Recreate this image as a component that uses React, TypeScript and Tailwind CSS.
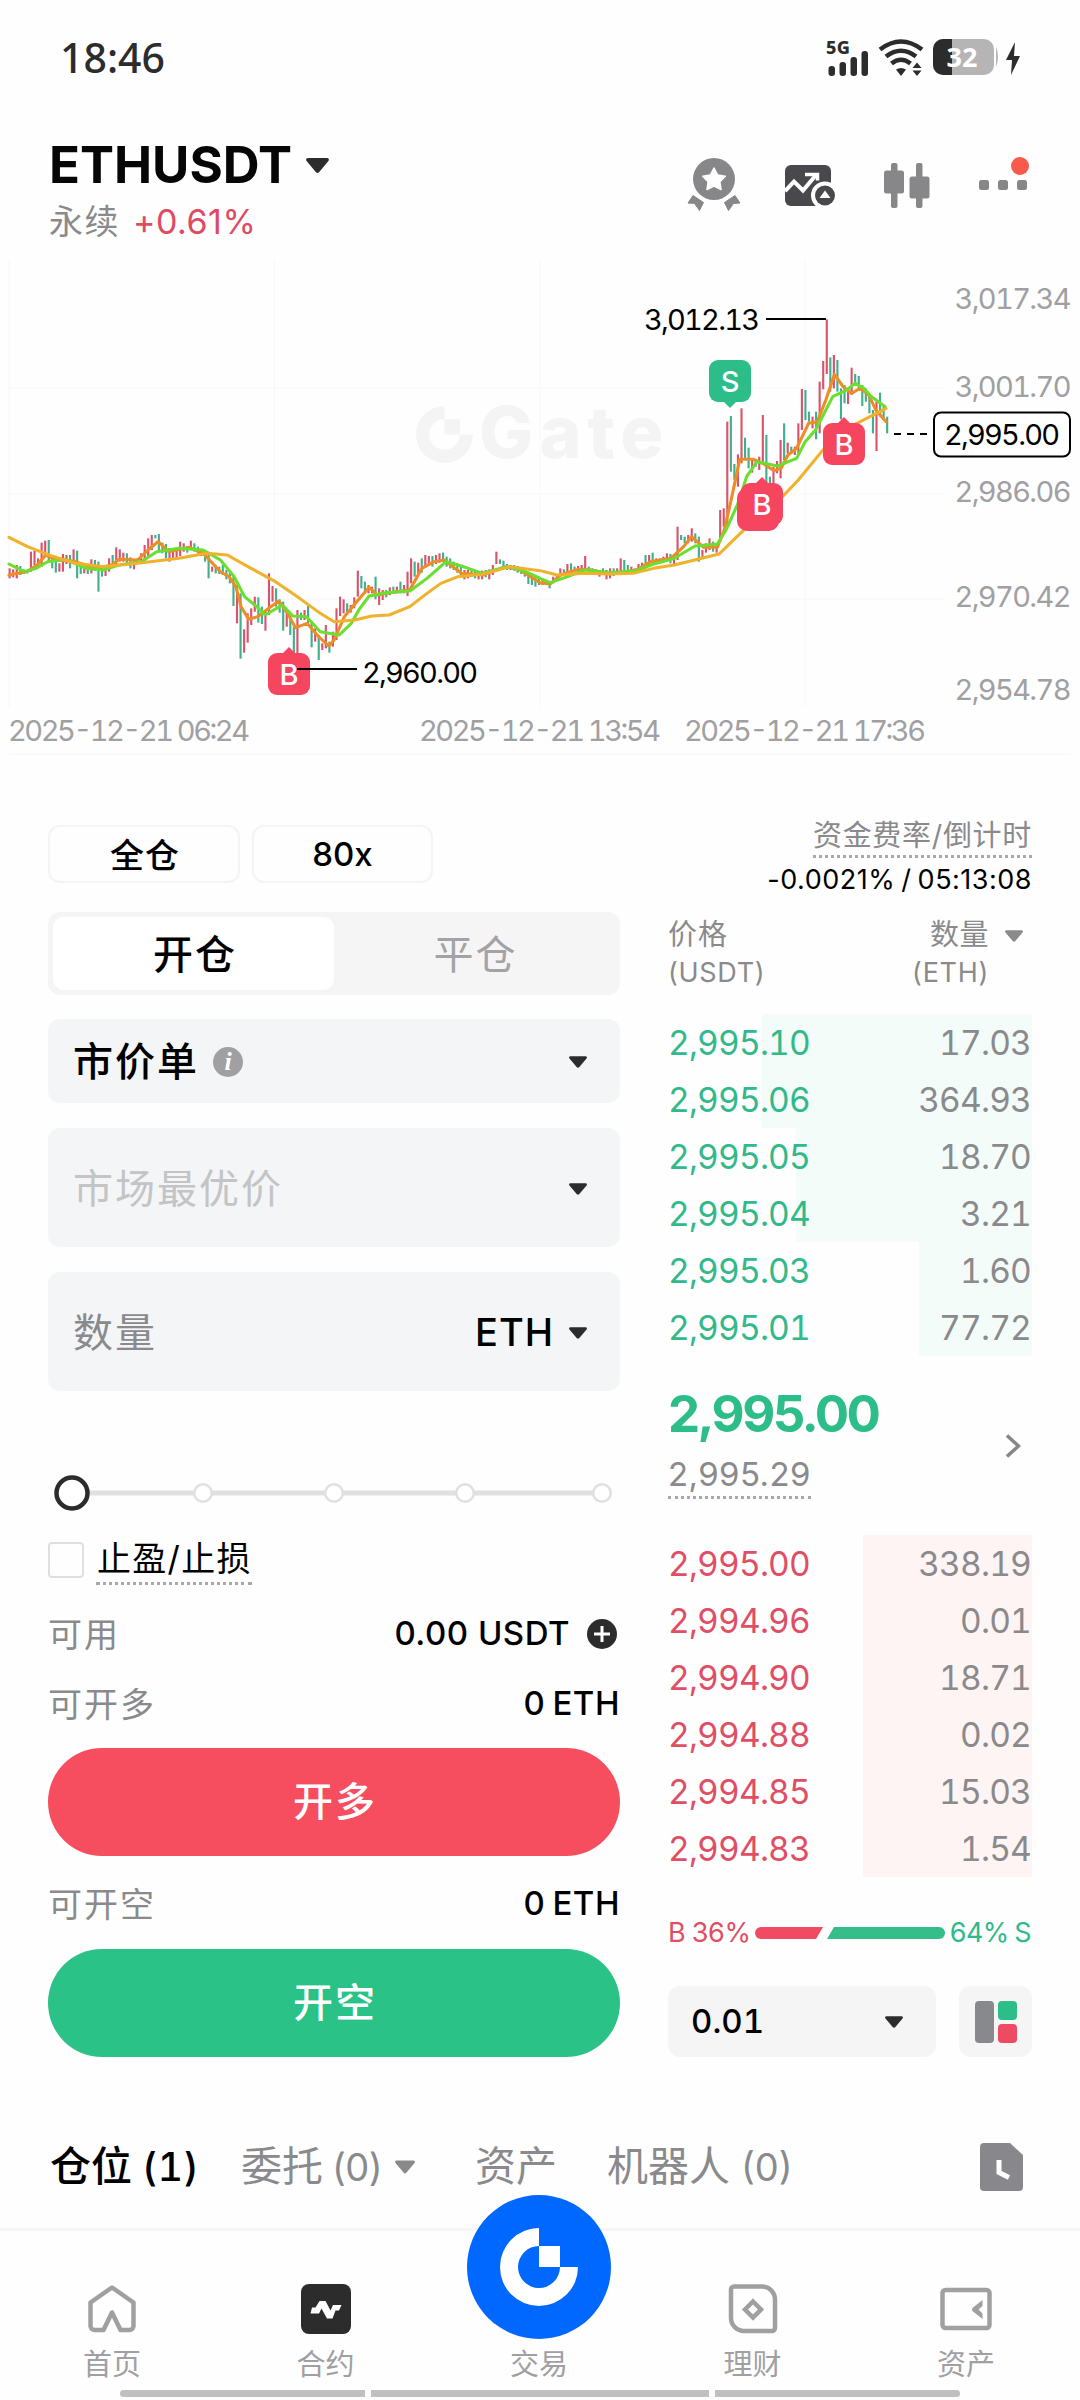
import clsx from 'clsx';
import React from 'react';

type Side = 'buy' | 'sell';

interface BookRow {
  price: string;
  amount: string;
  depth: number;
}

// widths of the depth bars are in px, measured from the right edge
const greenRows: BookRow[] = [
  { price: '2,995.10', amount: '17.03', depth: 270 },
  { price: '2,995.06', amount: '364.93', depth: 270 },
  { price: '2,995.05', amount: '18.70', depth: 236 },
  { price: '2,995.04', amount: '3.21', depth: 236 },
  { price: '2,995.03', amount: '1.60', depth: 113 },
  { price: '2,995.01', amount: '77.72', depth: 113 },
];

const redRows: BookRow[] = [
  { price: '2,995.00', amount: '338.19', depth: 169 },
  { price: '2,994.96', amount: '0.01', depth: 169 },
  { price: '2,994.90', amount: '18.71', depth: 169 },
  { price: '2,994.88', amount: '0.02', depth: 169 },
  { price: '2,994.85', amount: '15.03', depth: 169 },
  { price: '2,994.83', amount: '1.54', depth: 169 },
];

// one entry per candle: colour, high, low (plot units, 0 is the top)
const CANDLES = `
r925-955 r928-952 r915-955 g918-945 g928-942 g930-940 r875-935 r873-915 r895-925 r848-920
r842-885 g840-905 g885-925 g892-938 r910-935 r882-935 r885-912 g885-925 r868-912 g872-955
g910-942 r922-940 g915-942 r898-940 g900-932 g905-995 g922-950 r920-948 r895-935 g885-922
r862-920 r868-905 r878-905 g880-912 g892-925 r900-928 g895-910 r880-905 r855-905 r835-888
r825-870 g825-835 g822-872 g848-880 g852-895 r865-905 r870-900 r868-895 r845-888 r850-875
g858-878 r842-870 g850-875 g860-880 g868-888 g875-905 g880-955 r920-935 g915-940 g920-942
g915-945 g930-958 g935-970 g945-1038 r975-1090 g1000-1196 r1108-1178 r1060-1148 r1045-1095 r1010-1055
g1012-1088 g1040-1092 r1055-1112 r940-1065 r978-1025 g985-1040 g1018-1058 g1025-1112 r1060-1100 g1068-1125
g1100-1180 r1050-1185 g1058-1080 r1050-1080 g1038-1090 g1085-1162 r1105-1145 g1125-1200 r1150-1170 r1095-1165
g1145-1178 r1115-1160 r1045-1140 r1010-1068 r1018-1060 g1030-1062 r1035-1058 r1012-1045 r932-1010 g948-985
g965-1000 r975-1000 r980-1000 g950-1018 r985-1035 r990-1020 g990-1012 r982-1005 g980-1000 r980-1000
g965-1000 r975-1000 r935-1008 r895-970 g905-950 r908-945 g895-938 r885-922 r888-918 g888-920
r885-912 r880-908 g878-905 g890-920 g895-925 g905-930 g910-938 g920-950 r930-958 r930-955
g932-950 g935-955 r935-958 r932-958 g930-952 r928-958 r915-945 r875-912 g898-912 g902-920
g912-930 r915-930 g915-932 g918-938 g922-942 g928-950 g935-972 g940-975 g945-980 g950-975
r960-975 r965-975 g965-985 r950-970 g945-960 r925-950 g928-942 r912-940 g910-935 g920-935
r918-935 r915-935 r888-930 g920-932 g925-940 g928-945 r930-950 g925-945 r930-958 r925-955
g925-948 r925-945 r895-935 g900-930 g915-935 r920-938 g925-940 r912-935 r908-930 g885-925
r885-915 g878-910 r895-910 g895-910 r890-908 r880-905 g882-910 r890-912 r800-900 g825-840
g830-850 r825-850 r805-845 g820-850 g830-905 r870-895 r850-878 r835-870 g845-875 r850-878
r750-845 r745-800 r485-800 g468-635 g612-660 r583-680 r445-610 g533-600 g563-625 r598-638
g600-620 r590-630 r465-610 g525-680 g650-700 r620-700 r603-640 r540-655 g490-600 r548-580
g560-580 r560-585 r490-580 r387-510 g390-480 g455-485 r470-505 g455-538 r365-520 r303-388
r178-342 g292-395 r285-385 g300-395 g385-478 g375-430 r395-432 r323-405 g342-375 g348-385
g375-438 g385-425 g405-460 g450-520 r425-573 g398-470 g440-480 g470-520
`
  .trim()
  .split(/\s+/)
  .map((entry, i) => {
    const [high, low] = entry.slice(1).split('-').map(Number);
    return { x: 28 + i * 10.316, high, low, up: entry[0] === 'r' };
  });

const MA_SHORT =
  '26,945 77,935 108,915 133,885 160,900 211,903 280,925 325,915 345,898 400,900 430,870 459,845 490,875 550,862 590,880 640,935 665,950 685,980 700,1040 722,1078 748,1070 780,1045 810,1023 835,1060 858,1103 892,1090 925,1130 955,1158 970,1140 1000,1070 1040,1020 1072,982 1095,1005 1150,995 1190,990 1225,925 1260,905 1290,900 1340,940 1400,945 1470,920 1510,930 1568,968 1598,972 1628,945 1678,928 1718,930 1768,942 1848,930 1888,905 1948,895 1985,860 2008,830 2043,862 2083,862 2103,810 2123,720 2148,598 2188,598 2218,612 2248,632 2268,625 2288,585 2313,565 2348,490 2373,485 2398,420 2423,343 2448,380 2473,400 2498,385 2523,405 2543,450 2573,485';
const MA_MID =
  '26,912 70,935 105,925 138,905 190,898 250,925 300,930 345,915 410,905 455,875 520,865 590,870 640,900 680,950 710,1010 740,1035 770,1065 820,1035 850,1068 890,1070 930,1115 985,1125 1020,1090 1045,1045 1072,1008 1120,998 1190,993 1240,955 1295,905 1340,918 1400,940 1470,920 1520,932 1568,955 1598,968 1648,950 1698,930 1768,938 1848,932 1898,912 1958,895 2018,858 2083,852 2108,810 2143,730 2168,650 2198,605 2258,618 2313,595 2338,545 2368,510 2418,410 2458,390 2483,370 2508,385 2528,408 2570,440';
const MA_LONG =
  '26,832 80,860 150,888 220,910 300,920 400,910 520,895 600,880 660,885 720,920 800,965 870,1015 930,1060 970,1085 1030,1080 1080,1068 1130,1065 1190,1040 1240,1000 1280,970 1330,950 1400,943 1480,920 1568,932 1618,945 1698,940 1768,942 1838,940 1898,925 1958,915 2088,882 2158,812 2208,770 2274,708 2318,660 2388,572 2448,510 2498,485 2573,445';

const Caret: React.FC<{ className?: string }> = ({ className }) => (
  <svg viewBox="0 0 20 13" className={clsx('shrink-0', className)} fill="currentColor">
    <path d="M1.6 0h16.8c1.3 0 2 1.5 1.1 2.5l-8 9.6a2 2 0 0 1-3 0l-8-9.6C-.4 1.500.3 0 1.6 0z" />
  </svg>
);

const GateMark: React.FC<{ className?: string }> = ({ className }) => (
  <svg viewBox="0 0 78 78" className={className} fill="currentColor">
    <path d="M39 0v18a21 21 0 1 0 21 21h18A39 39 0 1 1 39 0z" />
    <path d="M39 18h21v21H39z" />
  </svg>
);

const StatusBar = () => (
  <div className="flex h-[116px] items-center justify-between pl-[60px] pr-[50px] text-[#2c2c2c]">
    <span className="font-['Noto_Sans'] text-[41px] font-medium">18:46</span>
    <svg width="204" height="48" viewBox="0 0 204 48" fill="currentColor">
      <text x="0" y="20" fontSize="18" fontWeight="800" fontFamily="Noto Sans" textLength="24">
        5G
      </text>
      <rect x="2.500" y="32" width="6.500" height="10" rx="3" />
      <rect x="13.500" y="28" width="6.500" height="14" rx="3" />
      <rect x="24.500" y="23" width="6.500" height="19" rx="3" />
      <rect x="35.500" y="17" width="6.500" height="25" rx="3" />
      <g fill="none" stroke="currentColor" strokeWidth="4.600">
        <path d="M54 15.500Q75 -.5 96 15.500" />
        <path d="M60 22.500Q75 11 90 22.500" />
        <path d="M65.500 29.500Q75 22 84.500 29.500" />
      </g>
      <path d="M70 35.500q5-3 10 0l-5 6.500z" />
      <path d="M91 28.500l4.500 5.500h-9zM91 42l4.500-5.500h-9z" />
      <rect x="107" y="5" width="61" height="36" rx="10" fill="#b5b5b5" />
      <path d="M170 13q4 10 0 20z" fill="#b5b5b5" />
      <path d="M117 5h9v36h-9a10 10 0 0 1-10-10V15a10 10 0 0 1 10-10z" />
      <text x="120.500" y="33" fontSize="27" fontWeight="700" fontFamily="Noto Sans" fill="#fff" textLength="31">
        32
      </text>
      <path d="M189 8l-9 18h6l-1 15 9-19h-6z" />
    </svg>
  </div>
);

const Header = () => (
  <header className="flex h-[144px] items-start justify-between pl-[49px] pr-[48px]">
    <div>
      <div className="mt-[18px] flex items-center">
        <h1 className="text-[51px] font-bold leading-[62px] text-[#060606]">ETHUSDT</h1>
        <Caret className="ml-[14px] h-[15px] w-[23px] text-[#2c2c2c]" />
      </div>
      <div className="mt-[6px] flex items-center gap-[13px] text-[34px] leading-[40px]">
        <span className="tracking-[1.500px] text-[#8a8a8c]">永续</span>
        <span className="tracking-[0.500px] text-[#df4a62]">+0.61%</span>
      </div>
    </div>
    <div className="mt-[36px] flex items-start">
      <svg width="54" height="60" viewBox="0 0 54 60" fill="#87878a">
        <circle cx="27" cy="27" r="21" />
        <path
          d="M27 16l3.600 6.900 7.700 1.300-5.400 5.600 1.100 7.700-7-3.400-7 3.400 1.100-7.700-5.400-5.600 7.700-1.300z"
          fill="#fff"
          stroke="#fff"
          strokeWidth="1.500"
          strokeLinejoin="round"
        />
        <path d="M6 43.500l10.500 7-4 8-5-7-6.500-.5z" stroke="#87878a" strokeLinejoin="round" />
        <path d="M48 43.500l-10.500 7 4 8 5-7 6.500-.5z" stroke="#87878a" strokeLinejoin="round" />
      </svg>
      <svg width="52" height="60" viewBox="0 0 52 60" className="ml-[43px]">
        <rect x="1" y="13" width="46" height="41" rx="6" fill="#48484d" />
        <path d="M1 39l9-9.500 9 9 13-15.500" fill="none" stroke="#fff" strokeWidth="4" />
        <path d="M21 22.500h12.500v6" fill="none" stroke="#fff" strokeWidth="3.500" />
        <circle cx="41" cy="43.500" r="14" fill="#fff" />
        <circle cx="41" cy="43.500" r="10" fill="#48484d" />
        <path d="M41 38.500l5.500 7.500h-11z" fill="#fff" />
      </svg>
      <svg width="46" height="60" viewBox="0 0 46 60" className="ml-[48px]" fill="#87878a">
        <rect x="7" y="11" width="6.500" height="45" rx="2" />
        <rect y="18.500" width="20" height="23" rx="2.500" />
        <rect x="32" y="11" width="6.500" height="45" rx="2" />
        <rect x="25.500" y="24.500" width="20" height="22" rx="2.500" />
      </svg>
      <svg width="54" height="60" viewBox="0 0 54 60" className="ml-[48px]" fill="#87878a">
        <rect x="1" y="28" width="10" height="10" rx="2.500" />
        <rect x="20" y="28" width="10" height="10" rx="2.500" />
        <rect x="39" y="28" width="10" height="10" rx="2.500" />
        <circle cx="42" cy="14" r="9" fill="#fa5a4b" />
      </svg>
    </div>
  </header>
);

interface MarkerProps {
  x: number;
  y: number;
  side: Side;
}

const Marker: React.FC<MarkerProps> = ({ x, y, side }) => {
  const color = side === 'buy' ? '#f5455f' : '#2dbd88';
  const tip = side === 'buy' ? 'M-7 -20L0 -27L7 -20z' : 'M-7 20L0 27L7 20z';
  return (
    <g transform={`translate(${x} ${y})`}>
      <path d={tip} fill={color} />
      <rect x="-21" y="-21" width="42" height="42" rx="9" fill={color} />
      <text y="10.500" textAnchor="middle" fontSize="29" fontWeight="500" fill="#fff">
        {side === 'buy' ? 'B' : 'S'}
      </text>
    </g>
  );
};

const axisLabels = [
  { y: 49, text: '3,017.34' },
  { y: 137, text: '3,001.70' },
  { y: 242, text: '2,986.06' },
  { y: 347, text: '2,970.42' },
  { y: 440, text: '2,954.78' },
];

const timeLabels = [
  { x: 8, text: '2025-12-21 06:24' },
  { x: 419, text: '2025-12-21 13:54' },
  { x: 684, text: '2025-12-21 17:36' },
];

const PriceChart = () => (
  <section className="relative h-[500px]">
    <div className="absolute left-[416px] top-[132px] flex items-center text-[#f4f4f5]">
      <GateMark className="mt-[4px] h-[57px] w-[57px]" />
      <span className="ml-[6px] text-[72px] font-extrabold leading-[80px] tracking-[6px]">Gate</span>
    </div>
    <svg
      width="1080"
      height="500"
      viewBox="0 0 3136 1500"
      preserveAspectRatio="none"
      className="absolute inset-0"
      fill="none"
    >
      <g stroke="#f7f7f8" strokeWidth="3">
        <path d="M797 0V1340M1568 0V1340M2338 0V1340M26 0V1340" />
        <path d="M26 385H2740M26 702H2740M26 1018H2740" />
        <path d="M26 1483H3110" stroke="#f3f3f4" />
      </g>
      {CANDLES.map((c) => (
        <path key={c.x} d={`M${c.x} ${c.high}V${c.low}`} stroke={c.up ? '#d9536b' : '#43ae8c'} strokeWidth="6.200" />
      ))}
      <g strokeWidth="9" strokeLinejoin="round" strokeLinecap="round">
        <polyline points={MA_SHORT} stroke="#ee8c25" />
        <polyline points={MA_MID} stroke="#6bdf30" />
        <polyline points={MA_LONG} stroke="#f0b22c" />
      </g>
    </svg>
    <svg width="1080" height="500" viewBox="0 0 1080 500" className="absolute inset-0 tabular-nums" fontSize="29">
      <Marker x={289} y={414} side="buy" />
      <Marker x={730} y={121} side="sell" />
      <rect x="737" y="228" width="42" height="43" rx="10" fill="#f5455f" />
      <Marker x={762} y={244} side="buy" />
      <Marker x={844} y={184} side="buy" />
      <path d="M766 59H826M297 409H357" stroke="#000" strokeWidth="2" />
      <path d="M894 174H934" stroke="#000" strokeWidth="2" strokeDasharray="7 6" />
      <text x="644" y="70" textLength="116">
        3,012.13
      </text>
      <text x="362" y="423" textLength="116">
        2,960.00
      </text>
      <rect x="934" y="152.500" width="136" height="44" rx="7" fill="#fff" stroke="#000" strokeWidth="2" />
      <text x="944" y="185" textLength="116">
        2,995.00
      </text>
      <g fill="#a0a0a2">
        {axisLabels.map((l) => (
          <text key={l.text} x="954.500" y={l.y} textLength="117">
            {l.text}
          </text>
        ))}
        {timeLabels.map((l) => (
          <text key={l.text} x={l.x} y="481" textLength="242">
            {l.text}
          </text>
        ))}
      </g>
    </svg>
  </section>
);

const SLIDER_STOPS = [203, 334, 465, 602];

const OrderForm = () => (
  <div className="flex w-[572px] flex-col">
    <div className="flex h-[58px] gap-[12px] text-black">
      <button className="flex w-[192px] items-center justify-center rounded-xl border-2 border-[#f4f4f5] pl-[2px] pt-[2px] text-[34px] font-medium tracking-[1px]">
        全仓
      </button>
      <button className="flex w-[181px] items-center justify-center rounded-xl border-2 border-[#f4f4f5] pt-[1px] text-[33px] font-medium">
        80x
      </button>
    </div>

    <div className="mt-[29px] flex h-[83px] rounded-xl bg-[#f5f5f6] p-[5px] text-[40px] tracking-[2px]">
      <button className="w-[281px] rounded-[11px] bg-white pl-[3px] pt-[2px] font-medium text-black">开仓</button>
      <button className="flex-1 pl-[2px] pt-[2px] text-[#a3a3a5]">平仓</button>
    </div>

    <div className="mt-[24px] flex h-[84px] items-center rounded-xl bg-[#f4f5f6] pl-[25px] pr-[33px] pt-[2px]">
      <span className="text-[40px] font-medium tracking-[2px] text-black">市价单</span>
      <span className="ml-[14px] flex h-[30px] w-[30px] items-center justify-center rounded-full bg-[#a0a0a2] font-['Liberation_Serif'] text-[26px] font-bold italic leading-none text-white">
        i
      </span>
      <Caret className="ml-auto h-[12px] w-[18px] text-[#2c2c2c]" />
    </div>

    <div className="mt-[25px] flex h-[119px] items-center rounded-xl bg-[#f4f5f6] pl-[25px] pr-[33px] pt-[2px]">
      <span className="text-[40px] tracking-[2px] text-[#c2c4c6]">市场最优价</span>
      <Caret className="ml-auto h-[12px] w-[18px] text-[#2c2c2c]" />
    </div>

    <div className="mt-[25px] flex h-[119px] items-center rounded-xl bg-[#f4f5f6] pl-[25px] pr-[33px] pt-[2px]">
      <span className="text-[40px] tracking-[2px] text-[#8a8a8c]">数量</span>
      <span className="ml-auto text-[38px] font-medium tracking-[1px] text-black">ETH</span>
      <Caret className="ml-[15px] h-[12px] w-[18px] text-[#2c2c2c]" />
    </div>

    <svg width="572" height="40" viewBox="48 0 572 40" className="mt-[82px] shrink-0" fill="#fff">
      <rect x="72" y="17.500" width="530" height="5" fill="#e0e0e0" />
      {SLIDER_STOPS.map((x) => (
        <circle key={x} cx={x} cy="20" r="8.800" stroke="#e0e0e0" strokeWidth="2.500" />
      ))}
      <circle cx="72" cy="20" r="15.500" stroke="#2c2c2c" strokeWidth="4.500" />
    </svg>

    <div className="mt-[22px] flex h-[50px] items-center">
      <span className="mt-[-1px] h-[36px] w-[36px] rounded border-2 border-[#e0e0e0]" />
      <span className="relative ml-[12px] border-b-[3px] border-dotted border-[#a8a8aa] pl-[1px] text-[34px] leading-[46px] tracking-[1.300px] text-black">
        止盈/止损
      </span>
    </div>

    <div className="mt-[24px] flex h-[50px] items-center text-[33px]">
      <span className="text-[34px] tracking-[2px] text-[#8a8a8c]">可用</span>
      <span className="ml-auto font-medium tracking-[0.500px] text-black">0.00 USDT</span>
      <svg width="30" height="30" viewBox="0 0 30 30" className="ml-[17px] mr-[3px]">
        <circle cx="15" cy="15" r="15" fill="#2c2c2c" />
        <path d="M15 7v16M7 15h16" stroke="#fff" strokeWidth="3" />
      </svg>
    </div>

    <div className="mt-[20px] flex h-[50px] items-center justify-between text-[33px]">
      <span className="text-[34px] tracking-[2px] text-[#8a8a8c]">可开多</span>
      <span className="font-medium tracking-[0.500px] text-black [word-spacing:-2px]">0 ETH</span>
    </div>
    <button className="mt-[19px] h-[108px] rounded-full bg-[#f64d5f] pl-[2px] text-[40px] font-medium tracking-[2px] text-white">
      开多
    </button>

    <div className="mt-[23px] flex h-[50px] items-center justify-between text-[33px]">
      <span className="text-[34px] tracking-[2px] text-[#8a8a8c]">可开空</span>
      <span className="font-medium tracking-[0.500px] text-black [word-spacing:-2px]">0 ETH</span>
    </div>
    <button className="mt-[20px] h-[108px] rounded-full bg-[#2bc287] pl-[2px] text-[40px] font-medium tracking-[2px] text-white">
      开空
    </button>
  </div>
);

const BookRows: React.FC<{ rows: BookRow[]; side: Side }> = ({ rows, side }) => (
  <div>
    {rows.map((row) => (
      <div
        key={row.price}
        className="relative flex h-[57px] items-center justify-between pr-[1px] pt-[2px] text-[33.500px] tracking-[-0.800px] tabular-nums"
      >
        <div
          className={clsx('absolute inset-y-0 right-0', side === 'buy' ? 'bg-[#f3fcf9]' : 'bg-[#fef4f3]')}
          style={{ width: row.depth }}
        />
        <span className={clsx('relative', side === 'buy' ? 'text-[#31b98a]' : 'text-[#e04e64]')}>{row.price}</span>
        <span className="relative text-[#8a8a8c]">{row.amount}</span>
      </div>
    ))}
  </div>
);

const OrderBook = () => (
  <div className="flex w-[364px] flex-col">
    <div className="flex flex-col items-end">
      <span className="mt-[-9px] border-b-[3px] border-dotted border-[#a8a8aa] text-[29px] leading-[39px] tracking-[0.700px] text-[#8a8a8c]">
        资金费率/倒计时
      </span>
      <span className="mt-[4px] whitespace-nowrap text-[27px] leading-[36px] tracking-[0.500px] text-black [word-spacing:-2px]">
        -0.0021% / 05:13:08
      </span>
    </div>

    <div className="mt-[18px] flex justify-between pr-[9px] text-[29px] leading-[38px] text-[#8a8a8c]">
      <div>
        <div className="tracking-[1px]">价格</div>
        <div className="text-[27px] tracking-[0.700px]">(USDT)</div>
      </div>
      <div className="flex">
        <div className="text-right">
          <div className="tracking-[0.500px]">数量</div>
          <div className="text-[27px] tracking-[0.700px]">(ETH)</div>
        </div>
        <Caret className="ml-[16px] mt-[14px] h-[12px] w-[18px]" />
      </div>
    </div>

    <div className="mt-[22px]">
      <BookRows rows={greenRows} side="buy" />
    </div>

    <div className="flex h-[179px] items-center justify-between pr-[11px]">
      <div className="mt-[-8px] flex flex-col items-start">
        <span className="text-[51px] font-bold leading-[60px] tracking-[-2.500px] text-[#2dbd88]">2,995.00</span>
        <span className="mt-[8px] border-b-[3px] border-dotted border-[#a8a8aa] text-[33px] leading-[44px] tracking-[0.400px] text-[#8a8a8c]">
          2,995.29
        </span>
      </div>
      <svg width="15" height="24" viewBox="0 0 15 24" fill="none" stroke="#87878a" strokeWidth="3.500">
        <path d="M1 1.500L12.500 12L1 22.500" />
      </svg>
    </div>

    <BookRows rows={redRows} side="sell" />

    <div className="mt-[36px] flex h-[40px] items-center justify-between whitespace-nowrap pr-[1px] text-[27px] [word-spacing:-1px]">
      <span className="tracking-[-0.300px] text-[#e04e64]">B 36%</span>
      <svg width="190" height="12" viewBox="0 0 190 12">
        <path d="M6 0h62l-7 12H6A6 6 0 0 1 6 0z" fill="#f04b63" />
        <path d="M79 0h105a6 6 0 0 1 0 12H72z" fill="#35bd8a" />
      </svg>
      <span className="tracking-[-0.700px] text-[#31b98a]">64% S</span>
    </div>

    <div className="mt-[33px] flex h-[71px] justify-between">
      <div className="flex w-[268px] items-center justify-between rounded-xl bg-[#f5f5f6] pl-[23px] pr-[33px]">
        <span className="text-[33px] font-medium tabular-nums text-black">0.01</span>
        <Caret className="h-[12px] w-[18px] text-[#2c2c2c]" />
      </div>
      <div className="flex w-[73px] items-center justify-center gap-[4px] rounded-xl bg-[#f5f5f6]">
        <span className="h-[42px] w-[19px] rounded-sm bg-[#87898c]" />
        <span className="flex flex-col gap-[4px]">
          <span className="h-[19px] w-[19px] rounded-sm bg-[#2dbd88]" />
          <span className="h-[19px] w-[19px] rounded-sm bg-[#ee4b62]" />
        </span>
      </div>
    </div>
  </div>
);

const PositionTabs = () => (
  <div className="flex h-[94px] items-center pl-[50px] pr-[57px] text-[41px] text-[#8a8a8c]">
    <span className="w-[191px] font-medium text-black">
      仓位<span className="ml-[10px] text-[39px] tabular-nums tracking-[0.500px]">(1)</span>
    </span>
    <span className="flex w-[234px] items-center">
      委托<span className="ml-[9px] text-[38px] tracking-[-0.500px]">(0)</span>
      <Caret className="ml-[13px] h-[14px] w-[20px]" />
    </span>
    <span className="w-[132px]">资产</span>
    <span>
      机器人<span className="ml-[11px] text-[38px]">(0)</span>
    </span>
    <svg width="43" height="49" viewBox="0 0 43 49" className="ml-auto" fill="#87878c">
      <path d="M4 0h26l13 12v32a4 4 0 0 1-4 4H4a4 4 0 0 1-4-4V4a4 4 0 0 1 4-4z" />
      <path d="M19 17v12.500l10 5" fill="none" stroke="#fff" strokeWidth="5" />
    </svg>
  </div>
);

const navItems = [
  {
    label: '首页',
    icon: (
      <svg width="52" height="52" viewBox="0 0 52 52" fill="none" stroke="#a0a0a2" strokeWidth="4.500" strokeLinejoin="round">
        <path d="M26 4.500L47.500 19.500V43a4 4 0 0 1-4 4H34.500L26 29.500 17.500 47H8.500a4 4 0 0 1-4-4V19.500z" />
      </svg>
    ),
  },
  {
    label: '合约',
    icon: (
      <svg width="52" height="52" viewBox="0 0 52 52">
        <rect x="1" y="1" width="50" height="50" rx="8" fill="#2c2c2c" />
        <path d="M12 24.500h3.500l4-6.500H25.500l5 9.500 2.500-5.500h8.500l-2.500 5.500h-3.500L32.500 35.500H27L21.500 25.500l-2.500 5h-8.500z" fill="#fff" />
      </svg>
    ),
  },
  { label: '交易', icon: null },
  {
    label: '理财',
    icon: (
      <svg width="52" height="52" viewBox="0 0 52 52" fill="none" stroke="#a0a0a2" strokeWidth="4.500">
        <path d="M7 3.500h28A13 13 0 0 1 48 16.500V45a3 3 0 0 1-3 3H17A13 13 0 0 1 4 35V6.500a3 3 0 0 1 3-3z" />
        <path d="M26 18.500l8 8-8 8-8-8z" strokeWidth="4.500" />
      </svg>
    ),
  },
  {
    label: '资产',
    icon: (
      <svg width="54" height="52" viewBox="0 0 54 52" fill="none" stroke="#a0a0a2" strokeWidth="4.500">
        <rect x="3.500" y="7" width="47" height="38" rx="3" />
        <path d="M43.500 17v6L39.500 26.500l4 4V36L34 28.500a2.500 2.500 0 0 1 0-4z" fill="#a0a0a2" stroke="none" />
      </svg>
    ),
  },
];

const BottomNav = () => (
  <nav className="relative flex h-[172px] justify-center border-t-[3px] border-[#f5f5f6] pr-[2px]">
    {navItems.map((item) => (
      <div key={item.label} className="flex w-[213.500px] flex-col items-center pt-[52px]">
        <div className="h-[52px]">{item.icon}</div>
        <span className="mt-[10px] text-[29px] leading-[40px] text-[#a0a0a2]">{item.label}</span>
      </div>
    ))}
    <div className="absolute left-[467px] top-[-36px] flex h-[144px] w-[144px] items-center justify-center rounded-full bg-[#0068ff] text-white">
      <GateMark className="h-[78px] w-[78px]" />
    </div>
    <div className="absolute bottom-[3px] left-[120px] flex gap-[6px]">
      <span className="h-[7px] w-[245px] rounded-l-full bg-[#c0c0c0]" />
      <span className="h-[7px] w-[338px] bg-[#c0c0c0]" />
      <span className="h-[7px] w-[245px] rounded-r-full bg-[#c0c0c0]" />
    </div>
  </nav>
);

export default function App() {
  return (
    <div className="flex h-[2400px] w-[1080px] flex-col overflow-hidden bg-[#fefefe] font-['Inter','Noto_Sans_CJK_SC',sans-serif]">
      <StatusBar />
      <Header />
      <PriceChart />
      <main className="flex h-[1360px] items-start justify-between pl-[48px] pr-[48px] pt-[65px]">
        <OrderForm />
        <OrderBook />
      </main>
      <PositionTabs />
      <div className="flex-1" />
      <BottomNav />
    </div>
  );
}
